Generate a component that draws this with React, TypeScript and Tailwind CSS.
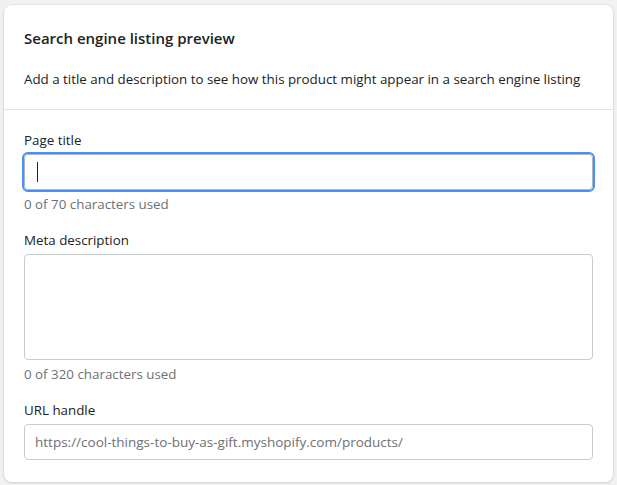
export default function App() {
  return (
    <div className="min-h-screen bg-[#f1f1f1] pt-[5px] pl-[4px] pr-[4px] font-['Segoe_UI','Open_Sans',sans-serif] text-[#202223]">
      <div className="w-[609px] rounded-[8px] bg-white shadow-[0_0_0_1px_rgba(63,63,68,0.04),0_1px_3px_0_rgba(63,63,68,0.15)]">
        <div className="px-5 pt-[22px] pb-[20px]">
          <h2 className="text-[15px] font-semibold leading-[22px]">Search engine listing preview</h2>
          <p className="mt-[20px] text-[13.35px] leading-[20px]">
            Add a title and description to see how this product might appear in a search engine listing
          </p>
        </div>
        <div className="h-px bg-[#e1e3e5]" />
        <div className="px-5 pt-[20px] pb-[22px]">
          <label className="block text-[13.35px] leading-[20px]">Page title</label>
          <div className="-mx-[2px] mt-[2px] rounded-[6px] border-2 border-[#458fff]">
            <div className="flex h-[36px] items-center rounded-[4px] border border-[#aeb4b9] px-3">
              <span className="h-[20px] w-px bg-[#202223]" />
            </div>
          </div>
          <p className="mt-[2px] text-[13.35px] leading-[20px] text-[#6d7175]">0 of 70 characters used</p>

          <label className="mt-[16px] block text-[13.35px] leading-[20px]">Meta description</label>
          <div className="mt-[4px] h-[106px] rounded-[4px] border border-[#c9cccf]" />
          <p className="mt-[4px] text-[13.35px] leading-[20px] text-[#6d7175]">0 of 320 characters used</p>

          <label className="mt-[16px] block text-[13.35px] leading-[20px]">URL handle</label>
          <div className="mt-[4px] flex h-[36px] items-center rounded-[4px] border border-[#c9cccf] pl-[10px] pr-3 text-[13.5px] text-[#6d7175]">
            https://cool-things-to-buy-as-gift.myshopify.com/products/
          </div>
        </div>
      </div>
    </div>
  )
}
